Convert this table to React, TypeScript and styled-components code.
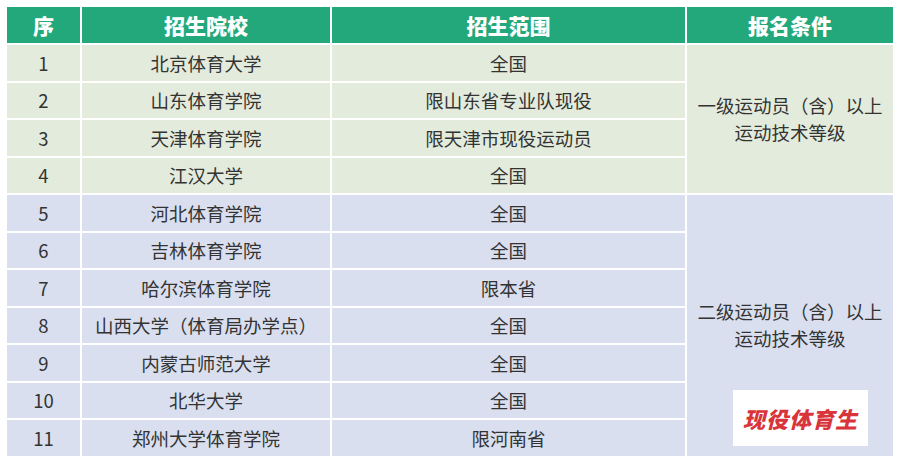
import React from "react";
import styled, { createGlobalStyle } from "styled-components";

const GlobalStyle = createGlobalStyle`
  html, body {
    margin: 0;
    padding: 0;
    background: #ffffff;
  }
  body {
    font-family: "Noto Sans CJK SC", "Noto Sans", sans-serif;
  }
`;

type Tone = "green" | "blue";

interface School {
  no: number;
  name: string;
  range: string;
  tone: Tone;
}

const schools: School[] = [
  { no: 1, name: "北京体育大学", range: "全国", tone: "green" },
  { no: 2, name: "山东体育学院", range: "限山东省专业队现役", tone: "green" },
  { no: 3, name: "天津体育学院", range: "限天津市现役运动员", tone: "green" },
  { no: 4, name: "江汉大学", range: "全国", tone: "green" },
  { no: 5, name: "河北体育学院", range: "全国", tone: "blue" },
  { no: 6, name: "吉林体育学院", range: "全国", tone: "blue" },
  { no: 7, name: "哈尔滨体育学院", range: "限本省", tone: "blue" },
  { no: 8, name: "山西大学（体育局办学点）", range: "全国", tone: "blue" },
  { no: 9, name: "内蒙古师范大学", range: "全国", tone: "blue" },
  { no: 10, name: "北华大学", range: "全国", tone: "blue" },
  { no: 11, name: "郑州大学体育学院", range: "限河南省", tone: "blue" },
];

const toneColor: Record<Tone, string> = {
  green: "#e3ebdc",
  blue: "#d9dfef",
};

export default function App() {
  return (
    <Page>
      <GlobalStyle />
      <Table>
        <HeadCell>序</HeadCell>
        <HeadCell>招生院校</HeadCell>
        <HeadCell>招生范围</HeadCell>
        <HeadCell>报名条件</HeadCell>
        {schools.map((s) => (
          <React.Fragment key={s.no}>
            <Cell $tone={s.tone}>{s.no}</Cell>
            <Cell $tone={s.tone}>{s.name}</Cell>
            <Cell $tone={s.tone}>{s.range}</Cell>
            {s.no === 1 && (
              <ConditionCell $tone="green" $start={2} $span={4}>
                一级运动员（含）以上
                <br />
                运动技术等级
              </ConditionCell>
            )}
            {s.no === 5 && (
              <ConditionCell $tone="blue" $start={6} $span={7}>
                二级运动员（含）以上
                <br />
                运动技术等级
                <Stamp>现役体育生</Stamp>
              </ConditionCell>
            )}
          </React.Fragment>
        ))}
      </Table>
    </Page>
  );
}

const Page = styled.div`
  padding: 7px;
  width: 886px;
`;

const Table = styled.div`
  display: grid;
  grid-template-columns: 73px 248px 353px 206px;
  grid-template-rows: 36px repeat(11, 35.5px);
  gap: 2px;
  width: 886px;
`;

const HeadCell = styled.div`
  background: #23a87b;
  color: #ffffff;
  font-size: 21px;
  font-weight: 900;
  display: flex;
  align-items: center;
  justify-content: center;
`;

const Cell = styled.div<{ $tone: Tone }>`
  background: ${(p) => toneColor[p.$tone]};
  color: #333333;
  font-size: 18.5px;
  display: flex;
  align-items: center;
  justify-content: center;
  white-space: nowrap;
`;

const ConditionCell = styled.div<{ $tone: Tone; $start: number; $span: number }>`
  grid-column: 4;
  grid-row: ${(p) => p.$start} / span ${(p) => p.$span};
  background: ${(p) => toneColor[p.$tone]};
  color: #333333;
  font-size: 18.5px;
  line-height: 27px;
  text-align: center;
  white-space: nowrap;
  display: flex;
  flex-direction: column;
  justify-content: center;
  position: relative;
`;

const Stamp = styled.div`
  position: absolute;
  left: 46px;
  top: 195px;
  width: 135px;
  height: 56px;
  background: #ffffff;
  color: #d8343a;
  font-size: 22px;
  font-weight: 900;
  font-style: italic;
  letter-spacing: 1px;
  line-height: 56px;
  text-align: center;
`;
